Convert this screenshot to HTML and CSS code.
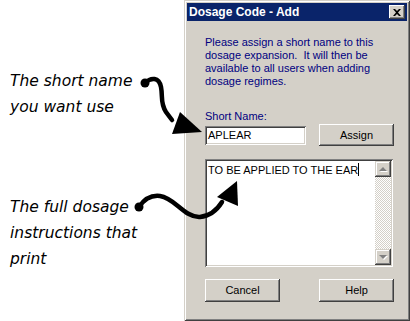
FILE: index.html
```
<!DOCTYPE html>
<html lang="en">
<head>
  <meta charset="UTF-8" />
  <title>Dosage Code - Add</title>
  <link rel="stylesheet" href="styles.css">
</head>
<body>
  <div class="page">
    <div class="notes">
      <p class="note">The short name<br>you want use</p>
      <p class="note note-full">The full dosage<br>instructions that<br>print</p>
    </div>

    <div class="dialog">
      <div class="titlebar">
        <span class="title">Dosage Code - Add</span>
        <span class="close">
          <svg width="8" height="7" viewBox="0 0 8 7"><path d="M0 0h2l2 2 2-2h2L5 3.5 8 7H6L4 5 2 7H0l3-3.5z" fill="#000"/></svg>
        </span>
      </div>
      <div class="body">
        <p class="intro">Please assign a short name to this dosage expansion.&nbsp; It will then be available to all users when adding dosage regimes.</p>
        <div class="label">Short Name:</div>
        <div class="row">
          <div class="field">APLEAR</div>
          <div class="btn">Assign</div>
        </div>
        <div class="memo">
          <div class="memo-text">TO BE APPLIED TO THE EAR<span class="caret"></span></div>
          <div class="scrollbar">
            <div class="sb-btn"><span class="tri up"></span></div>
            <div class="sb-track"></div>
            <div class="sb-btn"><span class="tri down"></span></div>
          </div>
        </div>
        <div class="row buttons">
          <div class="btn">Cancel</div>
          <div class="btn">Help</div>
        </div>
      </div>
    </div>

    <!-- hand drawn pointers, lying over both columns -->
    <svg class="arrows" width="410" height="321" viewBox="0 0 410 321">
      <g fill="none" stroke="#000" stroke-width="4.5" stroke-linecap="round">
        <path d="M145 83 C151 77 159 77 161 87 C163 97 160 103 166 112 L172 120" />
        <path d="M139 207 C145 198 152 195 160 196 C175 198 185 218 200 217 C210 216 217 210 222 202" />
      </g>
      <circle cx="145" cy="83" r="4.5" />
      <circle cx="139" cy="207" r="4.5" />
      <polygon points="180,112 172,134 202,132" />
      <polygon points="237,181 217,197 238,206" />
    </svg>
  </div>
</body>
</html>
```

FILE: styles.css
```
body {
  margin: 0;
  background: #fff;
  font-family: "Liberation Sans", Arial, sans-serif;
}
.page {
  position: relative;
  display: flex;
  width: 410px;
  height: 321px;
  overflow: hidden;
}
.notes {
  width: 184px;
  flex: none;
  box-sizing: border-box;
  padding: 68px 0 0 10px;
}
.note {
  margin: 0;
  font-family: "DejaVu Sans", sans-serif;
  font-style: italic;
  font-size: 15.5px;
  line-height: 26px;
  color: #000;
}
.note-full {
  margin-top: 74px;
}
.dialog {
  width: 226px;
  height: 321px;
  flex: none;
  box-sizing: border-box;
  padding: 3px;
  background: #d4d0c8;
  box-shadow: inset 1px 1px #d4d0c8, inset -1px -1px #404040, inset 2px 2px #fff, inset -2px -2px #808080;
}
.titlebar {
  height: 18px;
  display: flex;
  align-items: center;
  justify-content: space-between;
  padding: 0 2px;
  background: #0a246a;
}
.title {
  color: #fff;
  font-weight: bold;
  font-size: 12px;
}
.close {
  width: 16px;
  height: 14px;
  display: flex;
  align-items: center;
  justify-content: center;
  background: #d4d0c8;
  box-shadow: inset -1px -1px #404040, inset 1px 1px #fff, inset -2px -2px #808080;
}
.body {
  padding: 15px 13px 0 18px;
  font-size: 11px;
  line-height: 13px;
}
.intro {
  margin: 0;
  color: #000080;
  width: 172px;
}
.label {
  margin-top: 22px;
  color: #000080;
}
.row {
  display: flex;
  align-items: center;
  justify-content: space-between;
  margin-top: 1px;
}
.field {
  width: 101px;
  height: 19px;
  box-sizing: border-box;
  padding: 3px 3px 0;
  background: #fff;
  box-shadow: inset 1px 1px #808080, inset -1px -1px #fff, inset 2px 2px #404040, inset -2px -2px #d4d0c8;
}
.btn {
  width: 75px;
  height: 22px;
  display: flex;
  align-items: center;
  justify-content: center;
  background: #d4d0c8;
  color: #000;
  box-shadow: inset -1px -1px #404040, inset 1px 1px #fff, inset -2px -2px #808080, inset 2px 2px #d4d0c8;
}
.memo {
  margin-top: 13px;
  width: 188px;
  height: 108px;
  box-sizing: border-box;
  padding: 2px;
  display: flex;
  background: #fff;
  box-shadow: inset 1px 1px #808080, inset -1px -1px #fff, inset 2px 2px #404040, inset -2px -2px #d4d0c8;
}
.memo-text {
  flex: 1;
  padding: 2px 1px;
}
.caret {
  display: inline-block;
  width: 1px;
  height: 13px;
  background: #000;
  vertical-align: -2px;
}
.scrollbar {
  width: 16px;
  display: flex;
  flex-direction: column;
}
.sb-btn {
  height: 16px;
  display: flex;
  align-items: center;
  justify-content: center;
  background: #d4d0c8;
  box-shadow: inset -1px -1px #404040, inset 1px 1px #d4d0c8, inset -2px -2px #808080, inset 2px 2px #fff;
}
.sb-track {
  flex: 1;
  background: repeating-conic-gradient(#fff 0 25%, #d4d0c8 0 50%) 0 0 / 2px 2px;
}
.tri {
  width: 0;
  height: 0;
  border-left: 4px solid transparent;
  border-right: 4px solid transparent;
}
.tri.up {
  border-bottom: 4px solid #808080;
  filter: drop-shadow(1px 1px #fff);
}
.tri.down {
  border-top: 4px solid #808080;
  filter: drop-shadow(1px 1px #fff);
}
.buttons {
  margin-top: 12px;
}
.buttons .btn {
  height: 23px;
}
.arrows {
  position: absolute;
  top: 0;
  left: 0;
  pointer-events: none;
}
```
